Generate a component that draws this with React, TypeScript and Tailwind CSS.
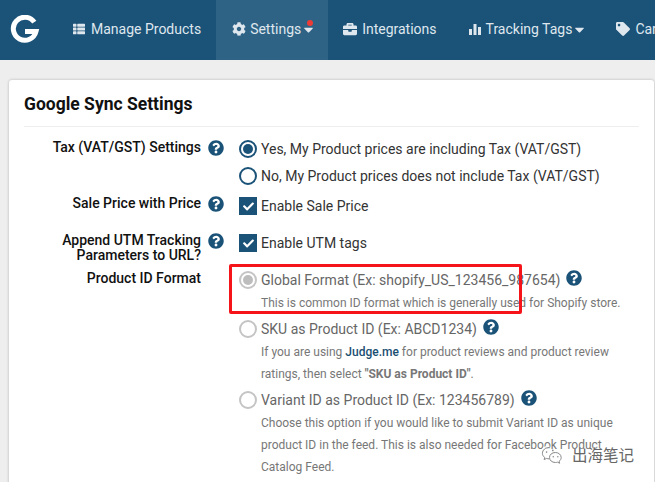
import React from 'react';
import { FaBriefcase, FaCaretDown, FaCheck, FaCog, FaQuestionCircle, FaTag, FaThList } from 'react-icons/fa';

const BarsIcon = () => (
  <svg width="12" height="12" viewBox="0 0 12 12" fill="currentColor" className="mr-[5px]">
    <rect x="0" y="6" width="3" height="6" />
    <rect x="4.5" y="1" width="3" height="11" />
    <rect x="9" y="4" width="3" height="8" />
  </svg>
);

const Logo = () => (
  <svg width="30" height="30" viewBox="0 0 30 30" fill="none" stroke="white" strokeWidth="5">
    <path d="M24.3 7.2A11.5 11.5 0 1 0 26 16.5H15" />
  </svg>
);

const Help = ({ className = '' }: { className?: string }) => (
  <FaQuestionCircle className={`text-[#1b5278] text-[16px] ${className}`} />
);

const Radio = ({ checked, muted }: { checked?: boolean; muted?: boolean }) => (
  <span
    className={`flex h-[18px] w-[18px] shrink-0 items-center justify-center rounded-full border-2 bg-white ${
      muted ? 'border-[#c4c4c4]' : 'border-[#1b5278]'
    }`}
  >
    {checked && <span className={`h-[10px] w-[10px] rounded-full ${muted ? 'bg-[#bdbdbd]' : 'bg-[#1b5278]'}`} />}
  </span>
);

const Checkbox = () => (
  <span className="flex h-[18px] w-[18px] shrink-0 items-center justify-center bg-[#1b5278] text-white">
    <FaCheck className="text-[11px]" />
  </span>
);

const Label = ({ children }: { children: React.ReactNode }) => (
  <div className="w-[177px] shrink-0 text-right text-[14px] font-medium leading-[15px] text-[#111]">{children}</div>
);

const NavItem = ({ icon, label, caret, className = '' }: { icon: React.ReactNode; label: string; caret?: boolean; className?: string }) => (
  <div className={`flex h-full shrink-0 items-center pb-[2px] text-[14px] text-[#dfe7ee] ${className}`}>
    {icon}
    <span>{label}</span>
    {caret && <FaCaretDown className="text-[15px]" />}
  </div>
);

const IdOption = ({ title, muted, children }: { title: string; muted?: boolean; children: React.ReactNode }) => (
  <div>
    <div className="flex h-[20px] items-center">
      <Radio checked={muted} muted />
      <span className="ml-[4px] text-[14px] text-[#666]">{title}</span>
      <Help className="ml-[6px] -translate-y-[2px]" />
    </div>
    <div className="mt-[2px] pl-[22px] text-[12px] leading-[22px] text-[#777]">{children}</div>
  </div>
);

const App: React.FC = () => {
  return (
    <div className="relative h-[482px] w-[655px] overflow-hidden bg-[#eeeeee] font-['Roboto',sans-serif]">
      <nav className="flex h-[60px] items-center overflow-hidden bg-[#1b5278]">
        <div className="ml-[10px] flex w-[63px] shrink-0">
          <Logo />
        </div>
        <NavItem icon={<FaThList className="mr-[6px] text-[12px]" />} label="Manage Products" />
        <div className="relative ml-[15px] flex h-full w-[112px] shrink-0 bg-[#2f6385] pl-[16px]">
          <NavItem icon={<FaCog className="mr-[4px] text-[14px]" />} label="Settings" caret />
          <span className="absolute left-[91px] top-[20px] h-[6px] w-[6px] rounded-full bg-[#ef3b36]" />
        </div>
        <NavItem className="ml-[15px]" icon={<FaBriefcase className="mr-[5px] text-[14px]" />} label="Integrations" />
        <NavItem className="ml-[32px]" icon={<BarsIcon />} label="Tracking Tags" caret />
        <NavItem className="ml-[29px]" icon={<FaTag className="mr-[5px] text-[14px]" />} label="Carts" />
      </nav>

      <main className="ml-[9px] mr-px mt-[20px] rounded-t-[3px] bg-white px-[15px] pb-[20px] shadow-[0_0_3px_rgba(0,0,0,0.25)]">
        <h1 className="flex h-[47px] items-center border-b border-[#eee] pt-[2px] text-[17.5px] font-bold text-[#111]">Google Sync Settings</h1>

        <div className="mt-[13px] flex">
          <Label>Tax (VAT/GST) Settings</Label>
          <Help className="ml-[7px] shrink-0" />
          <div className="ml-[15px] flex flex-col gap-[9px]">
            <div className="flex h-[18px] items-center gap-[4px] text-[14px] text-[#333]">
              <Radio checked />
              <span>Yes, My Product prices are including Tax (VAT/GST)</span>
            </div>
            <div className="flex h-[18px] items-center gap-[4px] text-[14px] text-[#333]">
              <Radio />
              <span>No, My Product prices does not include Tax (VAT/GST)</span>
            </div>
          </div>
        </div>

        <div className="mt-[11px] flex">
          <Label>Sale Price with Price</Label>
          <Help className="ml-[7px] shrink-0" />
          <div className="ml-[15px] mt-[1px] flex h-[18px] items-center gap-[4px] text-[14px] text-[#333]">
            <Checkbox />
            <span>Enable Sale Price</span>
          </div>
        </div>

        <div className="mt-[18px] flex">
          <Label>
            Append UTM Tracking
            <br />
            Parameters to URL?
          </Label>
          <Help className="ml-[7px] shrink-0" />
          <div className="ml-[15px] mt-[1px] flex h-[18px] items-center gap-[4px] text-[14px] text-[#333]">
            <Checkbox />
            <span>Enable UTM tags</span>
          </div>
        </div>

        <div className="mt-[8px] flex">
          <Label>Product ID Format</Label>
          <div className="-mt-[1px] ml-[38px] flex flex-col gap-[5px]">
            <IdOption title="Global Format (Ex: shopify_US_123456_987654)" muted>
              This is common ID format which is generally used for Shopify store.
            </IdOption>
            <IdOption title="SKU as Product ID (Ex: ABCD1234)">
              If you are using <span className="font-medium text-[#1b4f72]">Judge.me</span> for product reviews and product review
              <br />
              ratings, then select <b>"SKU as Product ID"</b>.
            </IdOption>
            <IdOption title="Variant ID as Product ID (Ex: 123456789)">
              Choose this option if you would like to submit Variant ID as unique
              <br />
              product ID in the feed. This is also needed for Facebook Product
              <br />
              Catalog Feed.
            </IdOption>
          </div>
        </div>
      </main>

      {/* red annotation box from the screenshot */}
      <div className="absolute left-[229px] top-[264px] h-[50px] w-[293px] rounded-[2px] border-[3px] border-[#f5141a]" />

      {/* wechat watermark */}
      <div className="absolute left-[540px] top-[445px] flex items-center gap-[8px] text-[#666]">
        <svg width="24" height="20" viewBox="0 0 26 24" fill="none" strokeWidth="1.2">
          <g stroke="white" strokeWidth="5" opacity="0.85">
            <path d="M10 3C5 3 1.5 6 1.5 10c0 2 1 3.8 2.8 5l-.8 2.5 3-1.4c1 .3 2 .5 3 .5" />
            <path d="M17 9c-4 0-7 2.6-7 6s3 6 7 6c1 0 1.8-.1 2.6-.4l2.6 1.3-.7-2.3c1.6-1.1 2.5-2.7 2.5-4.6 0-3.4-3-6-7-6z" />
          </g>
          <g stroke="#888">
            <path d="M10 3C5 3 1.5 6 1.5 10c0 2 1 3.8 2.8 5l-.8 2.5 3-1.4c1 .3 2 .5 3 .5" />
            <path d="M17 9c-4 0-7 2.6-7 6s3 6 7 6c1 0 1.8-.1 2.6-.4l2.6 1.3-.7-2.3c1.6-1.1 2.5-2.7 2.5-4.6 0-3.4-3-6-7-6z" />
          </g>
          <g fill="#888">
            <circle cx="6.5" cy="8.5" r="1" />
            <circle cx="14" cy="6.5" r="1" />
            <circle cx="14.5" cy="14" r="0.9" />
            <circle cx="20" cy="14" r="0.9" />
          </g>
        </svg>
        <span className="font-['Noto_Sans_CJK_SC',sans-serif] text-[15.5px] font-normal leading-none [text-shadow:0_0_2px_white]">出海笔记</span>
      </div>
    </div>
  );
};

export default App;
